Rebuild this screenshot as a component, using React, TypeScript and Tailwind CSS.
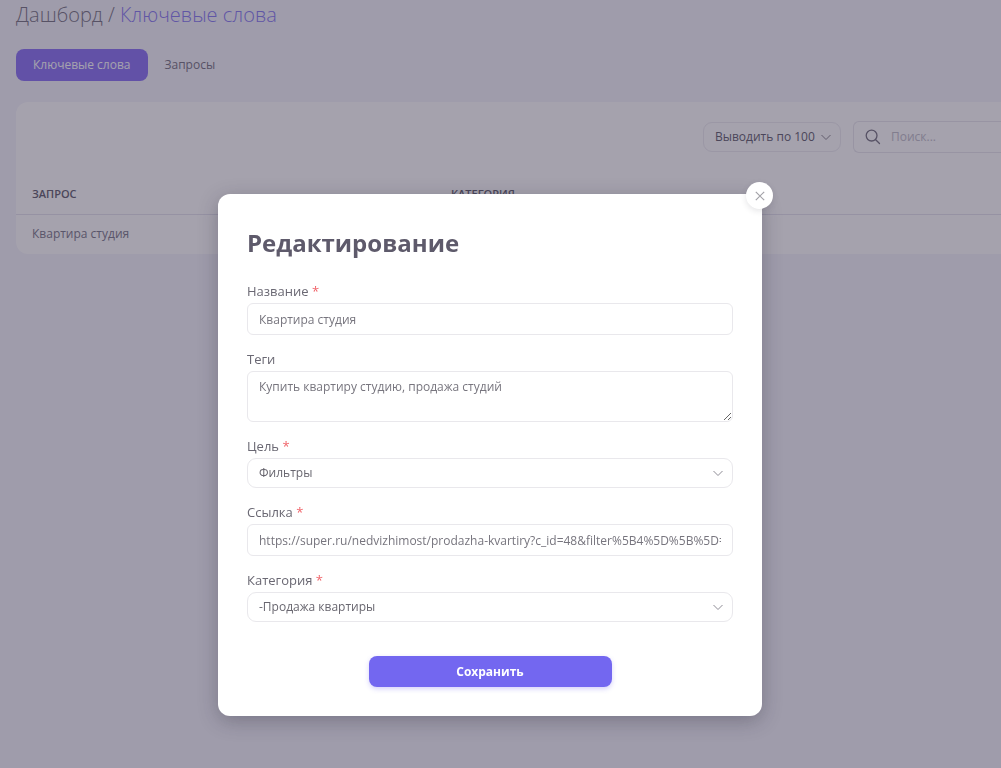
import React from "react";

type FieldProps = {
	id: string;
	label: string;
	required?: boolean;
	children: React.ReactNode;
};

type SelectProps = {
	id: string;
	options: string[];
	className?: string;
};

const inputStyle =
	"block w-full rounded-md border border-[#e9e8ec] bg-transparent px-[11px] text-[12px] text-[#77757e] outline-none focus:border-[#7367f0]";

const Chevron: React.FC = () => (
	<svg
		className="pointer-events-none absolute top-1/2 right-[10px] h-[10px] w-[10px] -translate-y-1/2"
		viewBox="0 0 10 10"
		fill="none"
		stroke="#8d8b94"
	>
		<path d="M0.5 3L5 7.5L9.5 3" />
	</svg>
);

const Select: React.FC<SelectProps> = ({ id, options, className }) => (
	<div className="relative">
		<select
			id={id}
			className={`block h-[30px] w-full appearance-none rounded-[9px] border bg-transparent px-[11px] text-[12px] outline-none ${
				className ?? "border-[#e9e8ec] text-[#68666f]"
			}`}
		>
			{options.map((option) => (
				<option key={option}>{option}</option>
			))}
		</select>
		<Chevron />
	</div>
);

const Field: React.FC<FieldProps> = ({ id, label, required, children }) => (
	<div className="flex flex-col gap-[2px]">
		<label htmlFor={id} className="text-[13px] leading-5 text-[#6a6873]">
			{label} {required && <span className="text-[#f0646a]">*</span>}
		</label>
		{children}
	</div>
);

const Page: React.FC = () => (
	<main className="min-h-screen overflow-hidden bg-[#f5f5fc] pl-4">
		<h1 className="text-[20px] leading-[30px] font-light text-[#7d7a88]">
			Дашборд / <span className="text-[#8c80f2]">Ключевые слова</span>
		</h1>

		<nav className="mt-[19px] flex h-8">
			<button className="rounded-lg bg-[#8f79f6] px-[17px] text-[12px] text-white">
				Ключевые слова
			</button>
			<button className="px-[17px] text-[12px] text-[#7d7a88]">Запросы</button>
		</nav>

		<section className="mt-[21px] rounded-l-xl bg-white pt-[19px]">
			<div className="flex items-center justify-end gap-3">
				<div className="w-[138px]">
					<Select
						id="per-page"
						options={["Выводить по 100", "Выводить по 50"]}
						className="border-[#eeedf2] text-[#6a6775]"
					/>
				</div>
				<label className="flex h-8 w-[148px] items-center gap-[10px] rounded-l-md border border-r-0 border-[#e9e8ee] pl-[11px]">
					<svg
						className="h-4 w-4 shrink-0"
						viewBox="0 0 16 16"
						fill="none"
						stroke="#7d7a88"
						strokeWidth="1.3"
						strokeLinecap="round"
					>
						<circle cx="6.6" cy="6.6" r="5.4" />
						<path d="M10.7 10.7L14.5 14.5" />
					</svg>
					<input
						type="search"
						aria-label="Поиск"
						placeholder="Поиск..."
						className="w-full min-w-0 bg-transparent text-[12px] outline-none placeholder:text-[#c4c2cc]"
					/>
				</label>
			</div>

			<table className="mt-[21px] w-full table-fixed text-left">
				<thead>
					<tr className="h-10 border-b border-[#e6e5ef] text-[11px] text-[#6a6775]">
						<th className="w-[419px] pl-4 font-semibold">ЗАПРОС</th>
						<th className="pl-4 font-semibold">КАТЕГОРИЯ</th>
					</tr>
				</thead>
				<tbody>
					<tr className="h-10 text-[12px] text-[#83808f]">
						<td className="pl-4">Квартира студия</td>
						<td />
					</tr>
				</tbody>
			</table>
		</section>
	</main>
);

const EditModal: React.FC = () => (
	<div className="fixed inset-0 flex items-start justify-center overflow-hidden bg-[#1e1732]/40 pt-[194px] pr-[21px]">
		<div
			role="dialog"
			aria-modal="true"
			aria-labelledby="modal-title"
			className="relative w-[544px] rounded-xl bg-white px-[29px] pt-[31px] pb-[29px] shadow-[0_5px_20px_rgba(34,30,50,0.3)]"
		>
			<button
				type="button"
				aria-label="Закрыть"
				className="absolute -top-3 -right-[11px] flex h-[27px] w-[27px] items-center justify-center rounded-full bg-white shadow-[0_2px_6px_rgba(34,30,50,0.12)]"
			>
				<svg className="h-[10px] w-[10px]" viewBox="0 0 10 10" fill="none" stroke="#a3a2a8" strokeWidth="1.2">
					<path d="M0.8 0.8L9.2 9.2M9.2 0.8L0.8 9.2" />
				</svg>
			</button>

			<h2 id="modal-title" className="text-[24px] leading-9 font-bold text-[#5e5a6b]">
				Редактирование
			</h2>

			<form className="mt-5 flex flex-col gap-[14px]" onSubmit={(e) => e.preventDefault()}>
				<Field id="name" label="Название" required>
					<input id="name" defaultValue="Квартира студия" className={`h-8 ${inputStyle}`} />
				</Field>
				<Field id="tags" label="Теги">
					<textarea
						id="tags"
						defaultValue="Купить квартиру студию, продажа студий"
						className={`h-[51px] resize py-[5px] leading-5 ${inputStyle}`}
					/>
				</Field>
				<Field id="target" label="Цель" required>
					<Select id="target" options={["Фильтры", "Страница"]} />
				</Field>
				<Field id="link" label="Ссылка" required>
					<input
						id="link"
						defaultValue="https://super.ru/nedvizhimost/prodazha-kvartiry?c_id=48&filter%5B4%5D%5B%5D=1"
						className={`h-8 ${inputStyle}`}
					/>
				</Field>
				<Field id="category" label="Категория" required>
					<Select id="category" options={["-Продажа квартиры", "-Аренда квартиры"]} />
				</Field>

				<button
					type="submit"
					className="mt-5 h-[31px] w-1/2 self-center rounded-lg bg-[#7367f0] text-[12px] font-bold text-white shadow-[0_2px_5px_rgba(115,103,240,0.3)]"
				>
					Сохранить
				</button>
			</form>
		</div>
	</div>
);

const App: React.FC = () => {
	return (
		<div className="font-['Open_Sans','Noto_Sans',sans-serif]">
			<Page />
			<EditModal />
		</div>
	);
};

export default App;
